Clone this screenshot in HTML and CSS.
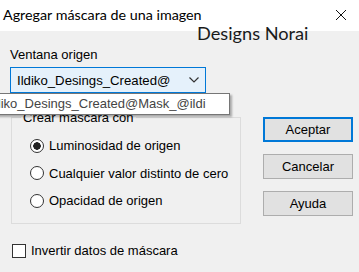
FILE: index.html
```html
<!DOCTYPE html>
<html lang="es">
<head>
  <meta charset="UTF-8" />
  <meta name="viewport" content="width=device-width, initial-scale=1.0" />
  <title>Agregar máscara de una imagen</title>
  <link rel="stylesheet" href="styles.css">
</head>
<body>
  <div class="window">
    <div class="titlebar">
      <span class="title">Agregar máscara de una imagen</span>
      <svg class="close" width="12" height="12" viewBox="0 0 12 12">
        <path d="M1 1 L11 11 M11 1 L1 11" stroke="#111" stroke-width="1" fill="none" />
      </svg>
    </div>

    <div class="watermark">Designs Norai</div>

    <div class="content">
      <div class="left">
        <label class="field-label">Ventana origen</label>
        <div class="combo">
          <span class="combo-text">Ildiko_Desings_Created@</span>
          <svg class="chevron" width="10" height="6" viewBox="0 0 10 6">
            <path d="M0.5 0.5 L5 5 L9.5 0.5" stroke="#333" stroke-width="1.2" fill="none" />
          </svg>
        </div>

        <fieldset class="group">
          <legend>Crear máscara con</legend>
          <label class="option"><input type="radio" name="src" checked /> Luminosidad de origen</label>
          <label class="option"><input type="radio" name="src" /> Cualquier valor distinto de cero</label>
          <label class="option"><input type="radio" name="src" /> Opacidad de origen</label>
        </fieldset>

        <label class="check"><input type="checkbox" /> Invertir datos de máscara</label>
      </div>

      <div class="buttons">
        <button class="default">Aceptar</button>
        <button>Cancelar</button>
        <button>Ayuda</button>
      </div>

      <!-- tooltip of the combo box -->
      <div class="tooltip">Ildiko_Desings_Created@Mask_@ildi</div>
    </div>
  </div>
</body>
</html>
```

FILE: styles.css
```css
:root {
  --face: #f0f0f0;
  --accent: #0078d7;
  --text: #000;
  --border: #adadad;
}

body {
  margin: 0;
  background: var(--face);
  font-family: "Liberation Sans", Arial, sans-serif;
  font-size: 13px;
  color: var(--text);
}

.window {
  position: relative;
  width: 359px;
  height: 272px;
  overflow: hidden;
}

.titlebar {
  height: 31px;
  background: #fff;
  display: flex;
  align-items: center;
  justify-content: space-between;
  padding: 0 12px 0 3px;
}

.title {
  font-family: Lato, "Noto Sans", sans-serif;
  font-size: 14.3px;
  margin-top: -2px;
}

.close {
  margin-top: -1px;
}

.watermark {
  position: absolute;
  left: 197px;
  top: 22px;
  font-family: Lato, "Noto Sans", sans-serif;
  font-size: 18.2px;
  color: #1a1a1a;
}

.content {
  position: relative;
  display: flex;
  align-items: flex-start;
  padding: 0 0 0 10px;
}

.left {
  width: 233px;
  display: flex;
  flex-direction: column;
}

.field-label {
  display: block;
  margin-top: 16px;
  line-height: 15px;
}

.combo {
  margin-top: 5px;
  width: 182px;
  height: 24px;
  border: 1px solid var(--accent);
  background: #e5f1fb;
  display: flex;
  align-items: center;
  justify-content: space-between;
  padding: 0 6px 0 6px;
}

.combo-text {
  font-size: 13.2px;
}

.group {
  margin: 18px 0 0 1px;
  padding: 0;
  width: 230px;
  height: 113px;
  border: 1px solid #dcdcdc;
  box-sizing: border-box;
  display: flex;
  flex-direction: column;
}

.group legend {
  padding: 0 2px;
  margin-left: 9px;
  line-height: 13px;
}

.option {
  display: flex;
  align-items: center;
  gap: 5px;
  height: 27.5px;
  padding-left: 18px;
}

.option:first-of-type {
  margin-top: 8px;
}

input[type="radio"] {
  appearance: none;
  margin: 0;
  width: 14px;
  height: 14px;
  border: 1px solid #333;
  border-radius: 50%;
  background: #fff;
  box-sizing: border-box;
}

input[type="radio"]:checked {
  background: radial-gradient(circle, #222 0 3.5px, #fff 4px);
}

.check {
  display: flex;
  align-items: center;
  gap: 5px;
  margin: 19px 0 0 2px;
}

input[type="checkbox"] {
  appearance: none;
  margin: 0;
  width: 14px;
  height: 14px;
  border: 1px solid #333;
  background: #fff;
  box-sizing: border-box;
}

.buttons {
  display: flex;
  flex-direction: column;
  gap: 12px;
  margin: 86px 0 0 20px;
}

button {
  width: 90px;
  height: 25px;
  background: #e1e1e1;
  border: 1px solid var(--border);
  font-family: "Liberation Sans", Arial, sans-serif;
  font-size: 13px;
  color: var(--text);
  padding: 0;
}

button.default {
  border: 2px solid var(--accent);
}

.tooltip {
  position: absolute;
  left: -20px;
  top: 62px;
  width: 250px;
  height: 22px;
  box-sizing: border-box;
  padding-left: 6px;
  line-height: 20px;
  background: #fff;
  border: 1px solid #767676;
  box-shadow: 2px 2px 2px rgba(0, 0, 0, 0.3);
  font-size: 13px;
  color: #444;
  white-space: nowrap;
}
```
